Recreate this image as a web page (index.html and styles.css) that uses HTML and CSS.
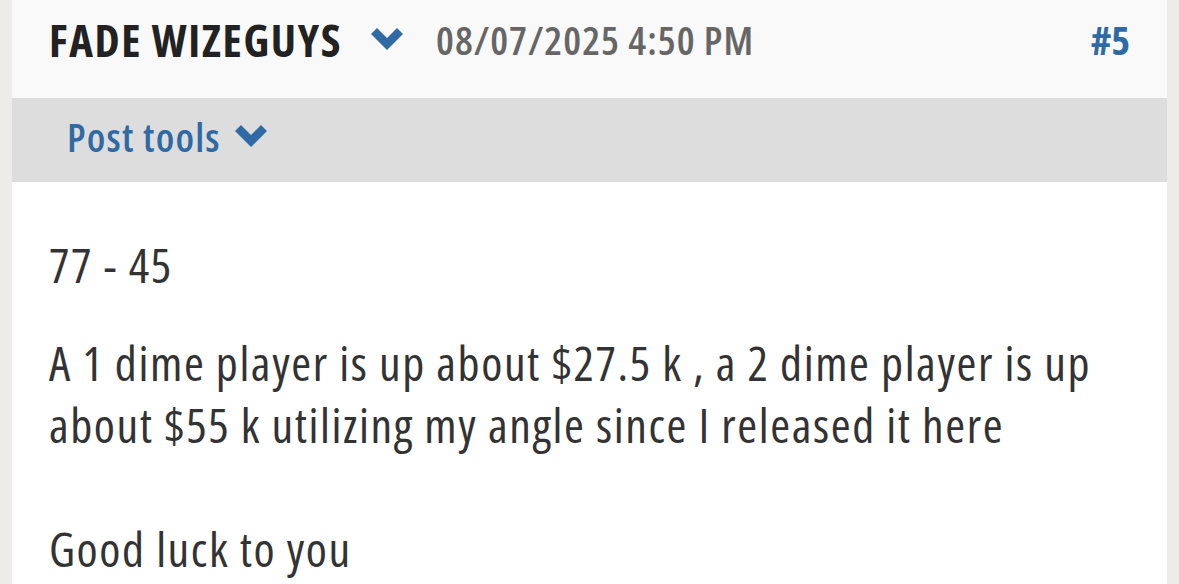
FILE: index.html
```html
<!DOCTYPE html>
<html lang="en">
<head>
  <meta charset="UTF-8">
  <title>Post #5</title>
  <link rel="stylesheet" href="styles.css">
</head>
<body>
  <div class="post">
    <div class="post-head">
      <span class="username">FADE WIZEGUYS</span>
      <svg class="chevron" viewBox="0 0 32 22"><polygon points="0,6 6,0 16,10 26,0 32,6 16,22"/></svg>
      <span class="post-date">08/07/2025 4:50 PM</span>
      <a class="post-num" href="#">#5</a>
    </div>
    <div class="post-tools">
      <span class="tools-link">Post tools</span>
      <svg class="chevron" viewBox="0 0 32 22"><polygon points="0,6 6,0 16,10 26,0 32,6 16,22"/></svg>
    </div>
    <div class="post-body">
      <p class="score">77 - 45</p>
      <p>A 1 dime player is up about $27.5 k , a 2 dime player is up about $55 k utilizing my angle since I released it here<br><br>Good luck to you</p>
    </div>
  </div>
</body>
</html>
```

FILE: styles.css
```css
body {
  margin: 0;
  padding: 0 12px;
  background-color: #eeece9;
  font-family: "Open Sans", "DejaVu Sans", sans-serif;
  font-stretch: 75%;
  color: #333;
}
.post {
  background-color: #fff;
  min-height: 584px;
}
.post-head {
  display: flex;
  align-items: center;
  height: 98px;
  box-sizing: border-box;
  padding: 0 37px 20px 37px;
  background-color: #f9f9f9;
}
.username {
  font-size: 45px;
  font-weight: 700;
  letter-spacing: 1.6px;
  color: #222;
}
.chevron {
  width: 32px;
  height: 22px;
  fill: #2f6aa5;
  flex-shrink: 0;
}
.post-head .chevron {
  margin: 0 33px 0 29px;
}
.post-date {
  font-size: 40px;
  font-weight: 600;
  letter-spacing: 1px;
  color: #666;
}
.post-num {
  margin-left: auto;
  font-size: 40px;
  font-weight: 700;
  color: #2f6aa5;
  text-decoration: none;
}
.post-tools {
  display: flex;
  align-items: center;
  height: 84px;
  box-sizing: border-box;
  padding: 0 0 8px 55px;
  background-color: #ddd;
}
.tools-link {
  font-size: 40px;
  font-weight: 600;
  letter-spacing: 1.2px;
  color: #2f6aa5;
  margin-right: 14px;
}
.post-body {
  padding: 52px 37px 0 37px;
  font-size: 48px;
  letter-spacing: 1.6px;
  line-height: 62px;
}
.post-body p {
  margin: 0;
}
.post-body .score {
  margin-bottom: 36px;
}
```
